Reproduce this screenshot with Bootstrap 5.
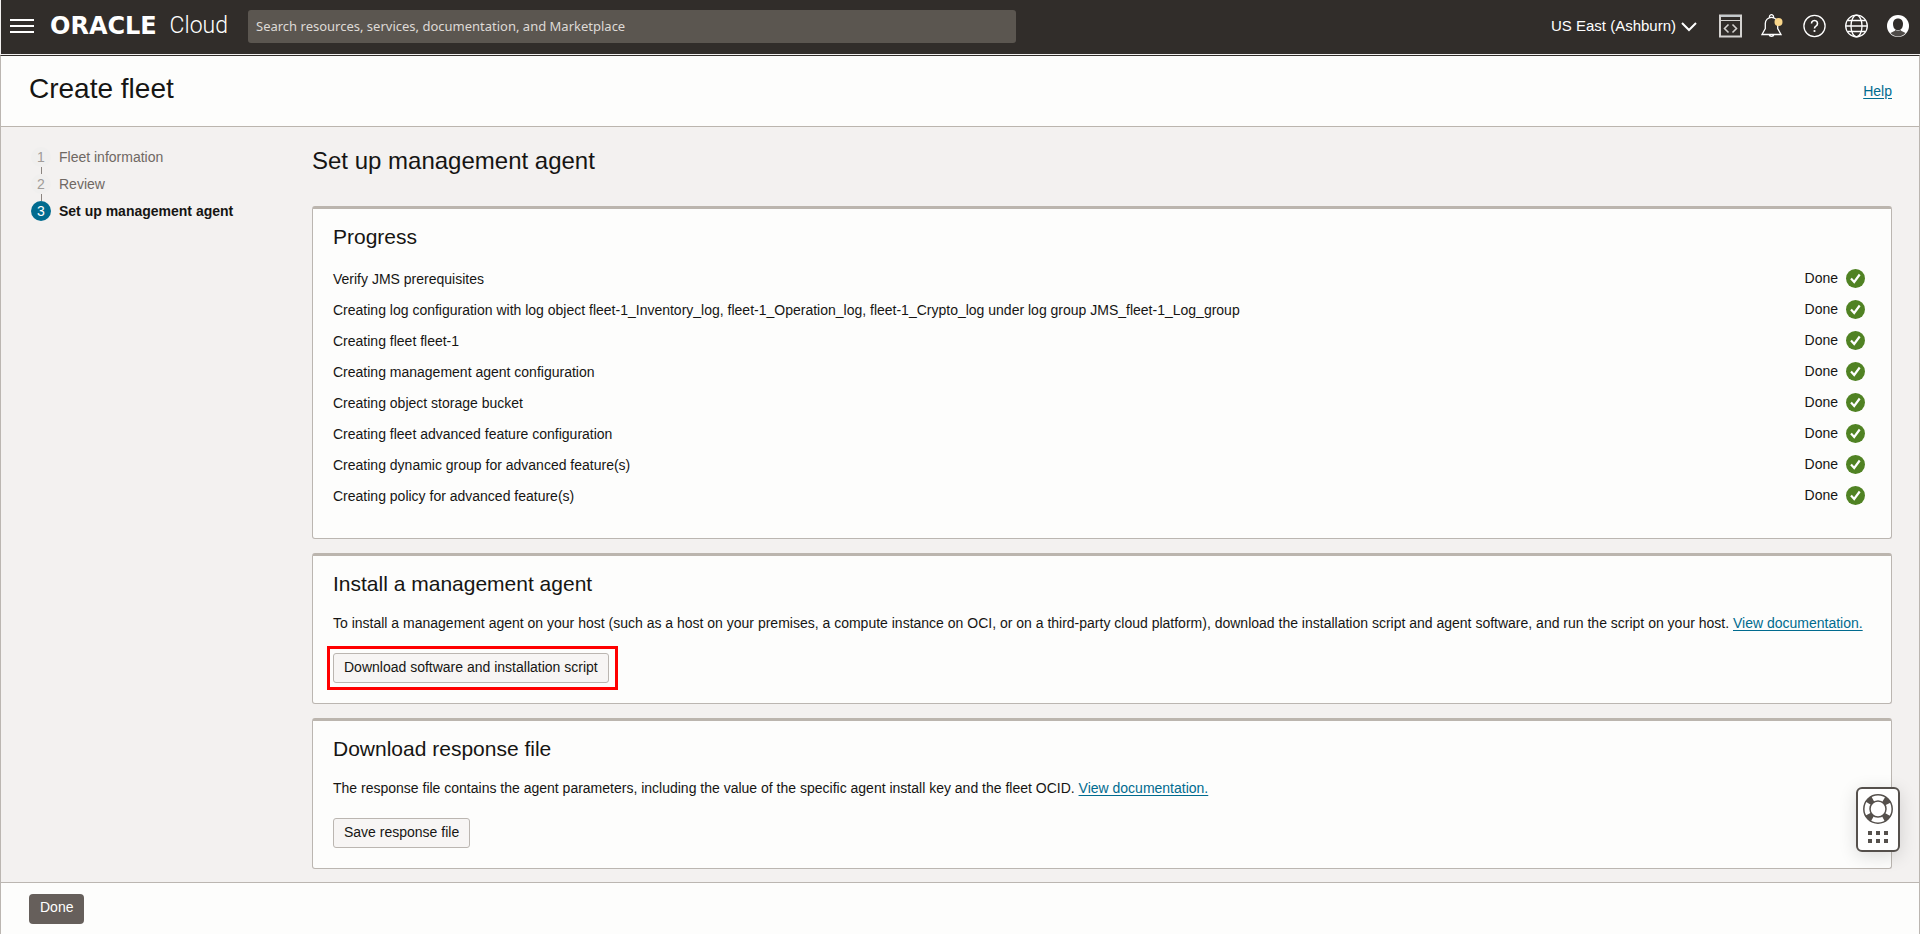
<!DOCTYPE html>
<html lang="en">
<head>
<meta charset="utf-8">
<meta name="viewport" content="width=device-width, initial-scale=1">
<title>Create fleet</title>
<link href="https://cdn.jsdelivr.net/npm/bootstrap@5.3.0/dist/css/bootstrap.min.css" rel="stylesheet">
<style>
body { font-family: "Liberation Sans", Arial, sans-serif; font-size: 14px; line-height: 20px; color: #161513; background: #f3f1f0; }
a { color: #006b8f; text-underline-offset: 2px; }
h1, h2, h3 { font-weight: 400; margin: 0; }
h1 { font-size: 28px; line-height: 32px; }
h2 { font-size: 24px; line-height: 28px; }
h3 { font-size: 21px; line-height: 24px; }
svg { display: block; flex: none; }
.topbar { height: 54px; margin-left: 1px; padding: 0 11px 2px 9px; background: #312d2a; color: #fff; }
.icon-button { border: 0; padding: 0; background: none; color: inherit; }
.brand-link { color: #fff; text-decoration: none; width: 178px; margin: 0 20px 0 16px; }
.brand-oracle { font: 700 24px/28px "DejaVu Sans", sans-serif; width: 121px; }
.brand-cloud { font: 300 23px/28px Roboto, sans-serif; }
.search-box { width: 40vw; height: 33px; border: 0; border-radius: 3px; padding: 0 8px; background: #5b5650; color: #e9e6e3; font: 13px/20px "Noto Sans", sans-serif; }
.search-box::placeholder { color: #dedad6; opacity: 1; }
.region-button { font-size: 15px; gap: 5px; margin-right: 22px; }
.tools { gap: 19px; }
.frame { border: 1px solid #bbb6b1; border-top: 1px solid #312d2a; margin-top: 1px; }
.frame-gap { background: #fff; }
.title-bar { padding: 17px 27px 21px 28px; min-height: 71px; background: #fdfdfc; border-bottom: 1px solid #bbb5ae; }
.content-row { padding: 20px 27px 13px 28px; }
.steps-nav { width: 283px; }
.step { height: 27px; gap: 8px; color: #6f6863; position: relative; }
.step-number { width: 20px; height: 20px; margin-left: 2px; border-radius: 50%; background: #f0efee; color: #a09c98; text-align: center; }
.step + .step::before { content: ""; position: absolute; left: 12px; top: -7px; width: 1px; height: 7px; background: #8b8580; }
.step.current { color: #161513; font-weight: 700; }
.step.current .step-number { background: #006b8f; color: #fff; font-weight: 400; }
.page-heading { margin-bottom: 31px; }
.panel { background: #fdfdfc; border: 1px solid #bbb6b1; border-top: 3px solid #bbb5ae; border-radius: 3px; padding: 16px 20px 20px; }
.panel + .panel { margin-top: 14px; }
.panel p { margin: 17px 0 20px; }
.progress-list { margin: 14px 0 7px; }
.progress-list li { height: 31px; padding-right: 6px; }
.task-state { padding-bottom: 2px; }
.plain-button { height: 30px; border: 1px solid #bbb6b1; border-radius: 3px; background: #f7f5f4; padding: 3px 10px 5px; font-size: 14px; line-height: 20px; color: #161513; }
.marked { border: 3px solid #f00; padding: 4px 6px 4px 3px; margin: -7px -6px -7px; }
.done-button { height: 30px; background: #665f5b; color: #fff; border: 0; border-radius: 4px; padding: 0 11px 4px; line-height: 20px; }
.bottom-bar { height: 52px; padding: 0 28px; background: #fdfdfc; border-top: 1px solid #bbb6b1; }
.support { position: fixed; right: 20px; bottom: 82px; width: 44px; height: 65px; border: 2px solid #55504c; border-radius: 6px; background: #fff; padding: 0; box-shadow: 0 4px 18px rgba(0,0,0,.14); }
</style>
</head>
<body class="d-flex flex-column min-vh-100">
<header class="topbar d-flex align-items-center">
  <button class="icon-button" aria-label="Menu"><svg width="24" height="16" stroke="#fff" stroke-width="2"><path d="M0 2h24M0 8h24M0 14h24"/></svg></button>
  <a class="brand-link d-flex align-items-center" href="#"><span class="brand-oracle">ORACLE</span><span class="brand-cloud">Cloud</span></a>
  <input class="search-box" type="search" aria-label="Search" placeholder="Search resources, services, documentation, and Marketplace">
  <button class="icon-button region-button d-flex align-items-center ms-auto">US East (Ashburn)<svg width="16" height="12" fill="none" stroke="#fff" stroke-width="2"><path d="M1 3l7 7 7-7"/></svg></button>
  <div class="tools d-flex align-items-center">
    <button class="icon-button" aria-label="Developer tools"><svg width="23" height="24" fill="none" stroke="#d4d2d0"><path d="M1 1.500h21v21H1z" stroke-width="2"/><path d="M1 6.500h21"/><path d="M2 2h19" stroke="#c4c9cc" stroke-width="2"/><path d="M9.500 10.500l-4 4 4 4M13.500 10.500l4 4-4 4" stroke-width="1.600"/></svg></button>
    <button class="icon-button" aria-label="Notifications"><svg width="23" height="24" fill="none" stroke="#fff" stroke-width="1.300"><path d="M1 20.500h19l-3.300-6V9.500a6.200 6.200 0 0 0-12.400 0v5zM8.700 3.500a2 2 0 1 1 3.600 0M8 20.500a2.600 2.600 0 0 0 5 0"/><circle cx="17.500" cy="8" r="4" fill="#f9d68a" stroke="none"/></svg></button>
    <button class="icon-button" aria-label="Help"><svg width="23" height="24" fill="none" stroke="#fff" stroke-width="1.300"><circle cx="11.500" cy="12" r="10.600"/><path d="M8.500 9.500a3 3 0 1 1 4.500 2.600c-1 .6-1.500 1-1.500 2.400" stroke-width="1.600"/><circle cx="11.500" cy="17" r="1.100" fill="#fff" stroke="none"/></svg></button>
    <button class="icon-button" aria-label="Language"><svg width="23" height="24" fill="none" stroke="#fff" stroke-width="1.300"><circle cx="11.500" cy="12" r="10.800"/><ellipse cx="11.500" cy="12" rx="5.500" ry="10.800"/><path d="M.7 12h21.600M3 6.500h17M3 17.500h17"/></svg></button>
    <button class="icon-button" aria-label="Profile"><svg width="22" height="24"><circle cx="11" cy="12" r="11" fill="#fff"/><path d="M11 4.500c3.100 0 5 2.200 5 5.500 0 2.500-1 4.400-2.300 5.500-1.500 1.100-3.900 1.100-5.400 0C7 14.400 6 12.500 6 10c0-3.300 1.900-5.500 5-5.500z" fill="#312d2a"/><path d="M3.500 19c2-1.300 4-1.500 5-3 1.600 1 3.400 1 5 0 1 1.500 3 1.700 5 3a10 10 0 0 1-15 0z" fill="#4f4b48"/></svg></button>
  </div>
</header>
<div class="frame flex-grow-1 d-flex flex-column">
  <div class="title-bar d-flex justify-content-between align-items-start">
    <h1>Create fleet</h1>
    <a class="mt-2" href="#">Help</a>
  </div>
  <div class="content-row d-flex flex-grow-1">
    <nav class="steps-nav flex-shrink-0" aria-label="Steps">
      <ol class="list-unstyled m-0">
        <li class="step d-flex align-items-start"><span class="step-number">1</span><span>Fleet information</span></li>
        <li class="step d-flex align-items-start"><span class="step-number">2</span><span>Review</span></li>
        <li class="step current d-flex align-items-start"><span class="step-number">3</span><span>Set up management agent</span></li>
      </ol>
    </nav>
    <main class="flex-grow-1 d-flex flex-column">
      <h2 class="page-heading">Set up management agent</h2>
      <section class="panel">
        <h3>Progress</h3>
        <ul class="progress-list list-unstyled" id="progress"></ul>
      </section>
      <section class="panel">
        <h3>Install a management agent</h3>
        <p>To install a management agent on your host (such as a host on your premises, a compute instance on OCI, or on a third-party cloud platform), download the installation script and agent software, and run the script on your host. <a href="#">View documentation.</a></p>
        <div class="d-flex"><div class="marked"><button class="plain-button d-block">Download software and installation script</button></div></div>
      </section>
      <section class="panel">
        <h3>Download response file</h3>
        <p>The response file contains the agent parameters, including the value of the specific agent install key and the fleet OCID. <a href="#">View documentation.</a></p>
        <div class="d-flex"><button class="plain-button">Save response file</button></div>
      </section>
    </main>
  </div>
  <footer class="bottom-bar d-flex align-items-center"><button class="done-button">Done</button></footer>
</div>
<button class="support" aria-label="Support"><svg width="40" height="61"><g fill="none" stroke="#55504c"><circle cx="20" cy="20" r="11" stroke-width="7" stroke-dasharray="6 11.280" stroke-dashoffset="-5.640"/><circle cx="20" cy="20" r="14.200" stroke-width="1.500"/><circle cx="20" cy="20" r="8" stroke-width="1.500"/></g><path d="M10 42h4v4h-4zM18 42h4v4h-4zM26 42h4v4h-4zM10 50h4v4h-4zM18 50h4v4h-4zM26 50h4v4h-4z" fill="#55504c"/></svg></button>
<script>
const tasks = [
  "Verify JMS prerequisites",
  "Creating log configuration with log object fleet-1_Inventory_log, fleet-1_Operation_log, fleet-1_Crypto_log under log group JMS_fleet-1_Log_group",
  "Creating fleet fleet-1",
  "Creating management agent configuration",
  "Creating object storage bucket",
  "Creating fleet advanced feature configuration",
  "Creating dynamic group for advanced feature(s)",
  "Creating policy for advanced feature(s)"
];
document.getElementById("progress").innerHTML = tasks.map(t =>
  `<li class="d-flex align-items-center justify-content-between"><span>${t}</span><span class="d-flex align-items-center gap-2"><span class="task-state">Done</span><svg width="19" height="19"><circle cx="9.500" cy="9.500" r="9.500" fill="#508223"/><path d="M5 9.500l3.200 3.500L13.700 5.500" fill="none" stroke="#fff" stroke-width="2.200"/></svg></span></li>`).join("");
</script>
<script src="https://cdn.jsdelivr.net/npm/bootstrap@5.3.0/dist/js/bootstrap.bundle.min.js"></script>
</body>
</html>
